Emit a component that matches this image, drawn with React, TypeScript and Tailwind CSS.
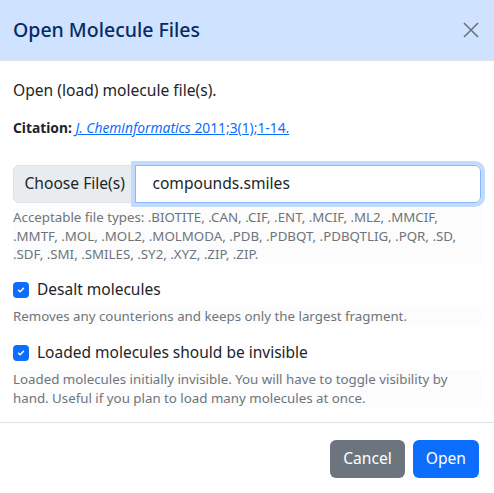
import React from "react";

const CheckOption = ({ label, help }: { label: string; help: React.ReactNode }) => {
  return (
    <div className="flex flex-col">
      <label className="flex items-center gap-[8px] h-[24px]">
        <span className="w-[16px] h-[16px] rounded-[4px] bg-[#0d6efd] flex items-center justify-center shrink-0">
          <svg width="10" height="10" viewBox="0 0 20 20" fill="none">
            <path d="M5 10.5l3.2 3L15 6.5" stroke="white" strokeWidth="3" strokeLinecap="round" strokeLinejoin="round" />
          </svg>
        </span>
        <span className="text-[15.5px] text-[#212529]">{label}</span>
      </label>
      <div className="mt-[5px] bg-[#fcfcfc] text-[13.3px] leading-[18.5px] text-[#6c757d]">{help}</div>
    </div>
  );
};

export default function App() {
  return (
    <div className="w-[494px] h-[493px] bg-white flex flex-col font-['Noto_Sans',sans-serif] text-[#212529]">
      <div className="h-[61px] bg-[#cfe2ff] border-b border-[#dee2e6] flex items-center justify-between pl-[13px] pr-[15px] shrink-0">
        <h1 className="text-[19.5px] font-medium text-[#052c65] leading-none">Open Molecule Files</h1>
        <svg width="16" height="16" viewBox="0 0 16 16" className="text-[#6b7280]">
          <path d="M1 1l14 14M15 1L1 15" stroke="currentColor" strokeWidth="1.6" />
        </svg>
      </div>

      <div className="flex flex-col px-[13px] pt-[17px]">
        <p className="text-[15.6px] leading-[24px]">Open (load) molecule file(s).</p>
        <p className="mt-[16px] text-[13.8px] leading-[20px]">
          <span className="font-bold">Citation:</span>{" "}
          <a className="text-[#0d6efd] underline">
            <i>J. Cheminformatics</i> 2011;3(1);1-14.
          </a>
        </p>

        <div className="mt-[27px] flex h-[38px]">
          <div className="h-full px-[10.5px] flex items-center bg-[#e9ecef] border border-[#dee2e6] rounded-l-[6px] text-[15.6px] whitespace-nowrap">
            Choose File(s)
          </div>
          <div className="flex-1 h-full flex items-center px-[16px] border border-[#86b7fe] rounded-r-[6px] outline outline-[4px] outline-[#c2dbfe] text-[15.6px] -ml-px">
            compounds.smiles
          </div>
        </div>
        <div className="mt-[5px] bg-[#fcfcfc] text-[13.3px] leading-[18.5px] text-[#6c757d]">
          Acceptable file types: .BIOTITE, .CAN, .CIF, .ENT, .MCIF, .ML2, .MMCIF,
          <br />
          .MMTF, .MOL, .MOL2, .MOLMODA, .PDB, .PDBQT, .PDBQTLIG, .PQR, .SD,
          <br />
          .SDF, .SMI, .SMILES, .SY2, .XYZ, .ZIP, .ZIP.
        </div>

        <div className="mt-[14px]">
          <CheckOption label="Desalt molecules" help="Removes any counterions and keeps only the largest fragment." />
        </div>
        <div className="mt-[16px]">
          <CheckOption
            label="Loaded molecules should be invisible"
            help={
              <>
                Loaded molecules initially invisible. You will have to toggle visibility by
                <br />
                hand. Useful if you plan to load many molecules at once.
              </>
            }
          />
        </div>
      </div>

      <div className="mt-auto border-t border-[#dee2e6] h-[71px] flex items-start justify-end gap-[8px] px-[15px] pt-[17px]">
        <button className="h-[38px] px-[13px] rounded-[6px] bg-[#6c757d] text-white text-[15.6px]">Cancel</button>
        <button className="h-[38px] px-[13px] rounded-[6px] bg-[#0d6efd] text-white text-[15.6px]">Open</button>
      </div>
    </div>
  );
}
